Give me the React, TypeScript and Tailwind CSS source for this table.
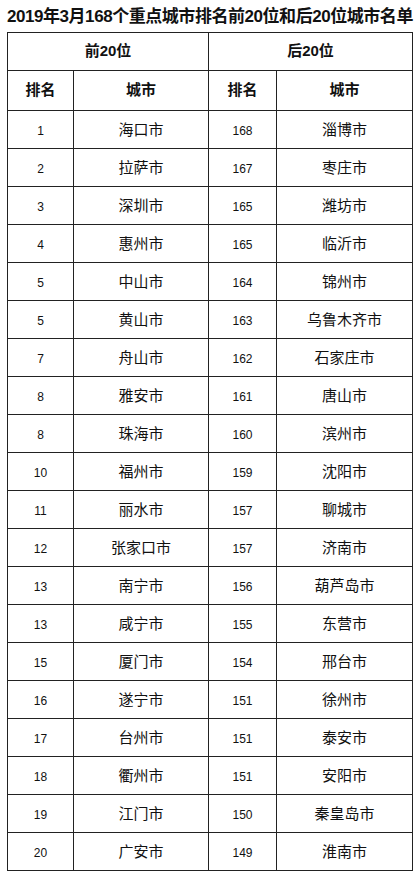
import React from "react";

const top = [
  ["1", "海口市"],
  ["2", "拉萨市"],
  ["3", "深圳市"],
  ["4", "惠州市"],
  ["5", "中山市"],
  ["5", "黄山市"],
  ["7", "舟山市"],
  ["8", "雅安市"],
  ["8", "珠海市"],
  ["10", "福州市"],
  ["11", "丽水市"],
  ["12", "张家口市"],
  ["13", "南宁市"],
  ["13", "咸宁市"],
  ["15", "厦门市"],
  ["16", "遂宁市"],
  ["17", "台州市"],
  ["18", "衢州市"],
  ["19", "江门市"],
  ["20", "广安市"],
];

const bottom = [
  ["168", "淄博市"],
  ["167", "枣庄市"],
  ["165", "潍坊市"],
  ["165", "临沂市"],
  ["164", "锦州市"],
  ["163", "乌鲁木齐市"],
  ["162", "石家庄市"],
  ["161", "唐山市"],
  ["160", "滨州市"],
  ["159", "沈阳市"],
  ["157", "聊城市"],
  ["157", "济南市"],
  ["156", "葫芦岛市"],
  ["155", "东营市"],
  ["154", "邢台市"],
  ["151", "徐州市"],
  ["151", "泰安市"],
  ["151", "安阳市"],
  ["150", "秦皇岛市"],
  ["149", "淮南市"],
];

const font = {
  fontFamily: '"Liberation Sans", "Noto Sans CJK SC", sans-serif',
};

export default function App() {
  return (
    <div
      className="w-[420px] h-[875px] bg-white text-[#111] overflow-hidden"
      style={font}
    >
      <div className="h-[32px] pl-[7px] flex items-center text-[17px] font-bold tracking-[-0.45px] leading-none whitespace-nowrap">
        2019年3月168个重点城市排名前20位和后20位城市名单
      </div>
      <table className="ml-[7px] w-[405px] table-fixed border-collapse border border-[#222]">
        <colgroup>
          <col className="w-[66px]" />
          <col className="w-[135px]" />
          <col className="w-[68px]" />
          <col className="w-[136px]" />
        </colgroup>
        <tbody>
          <tr className="h-[38px]">
            <td
              colSpan={2}
              className="border border-[#222] text-center text-[15px] font-bold p-0"
            >
              前20位
            </td>
            <td
              colSpan={2}
              className="border border-[#222] text-center text-[15px] font-bold p-0"
            >
              后20位
            </td>
          </tr>
          <tr className="h-[40px]">
            <td className="border border-[#222] text-center text-[15px] font-bold p-0">
              排名
            </td>
            <td className="border border-[#222] text-center text-[15px] font-bold p-0">
              城市
            </td>
            <td className="border border-[#222] text-center text-[15px] font-bold p-0">
              排名
            </td>
            <td className="border border-[#222] text-center text-[15px] font-bold p-0">
              城市
            </td>
          </tr>
          {top.map((r, i) => (
            <tr key={i} className="h-[38px]">
              <td className="border border-[#222] text-center text-[12px] p-0 pt-[2px]">
                {r[0]}
              </td>
              <td className="border border-[#222] text-center text-[15px] p-0 pt-[2px]">
                {r[1]}
              </td>
              <td className="border border-[#222] text-center text-[12px] p-0 pt-[2px]">
                {bottom[i][0]}
              </td>
              <td className="border border-[#222] text-center text-[15px] p-0 pt-[2px]">
                {bottom[i][1]}
              </td>
            </tr>
          ))}
        </tbody>
      </table>
    </div>
  );
}
